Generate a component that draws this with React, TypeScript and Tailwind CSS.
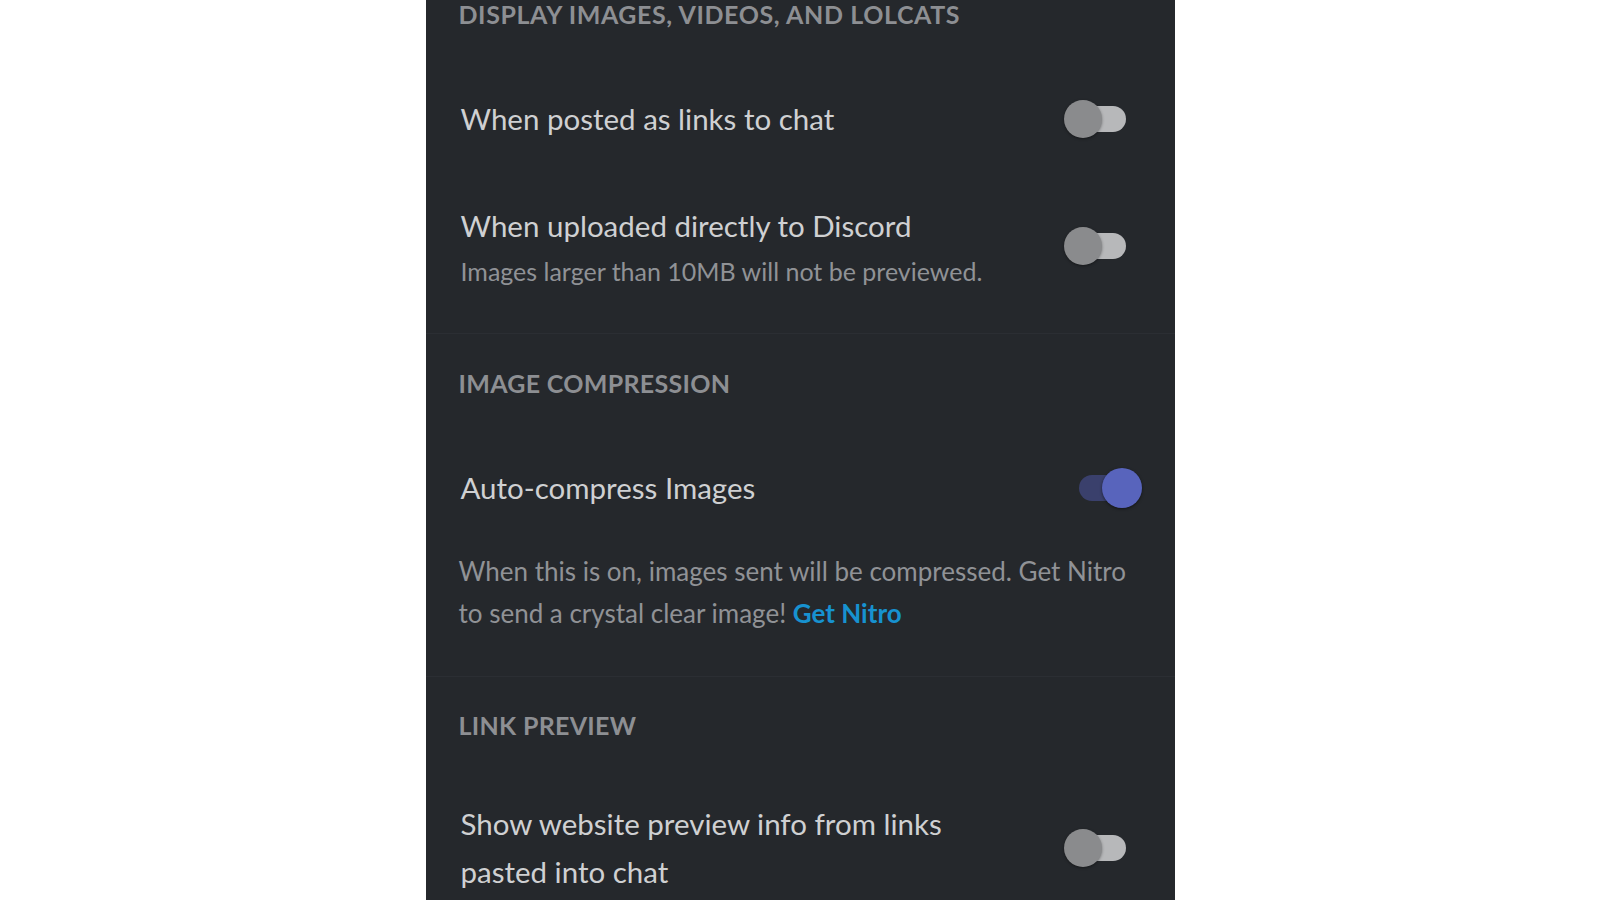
import React from "react";

function Toggle({ on }: { on?: boolean }) {
  if (on) {
    return (
      <div className="relative w-[63px] h-[40px] shrink-0">
        <div className="absolute left-0 top-[7px] w-[44px] h-[26px] rounded-full bg-[#3a406c]" />
        <div className="absolute right-0 top-0 w-[40px] h-[40px] rounded-full bg-[#5864bc] shadow-[0_1px_3px_rgba(0,0,0,0.5)]" />
      </div>
    );
  }
  return (
    <div className="relative w-[62px] h-[38px] shrink-0 mr-[16px]">
      <div className="absolute right-0 top-[6px] w-[50px] h-[26px] rounded-full bg-[#b7b8ba]" />
      <div className="absolute left-0 top-0 w-[38px] h-[38px] rounded-full bg-[#8a8b8d] shadow-[0_1px_3px_rgba(0,0,0,0.4)]" />
    </div>
  );
}

export default function App() {
  const font = { fontFamily: "Lato, 'Open Sans', sans-serif" } as React.CSSProperties;
  return (
    <div className="w-[1600px] h-[900px] bg-white flex justify-center overflow-hidden" style={font}>
      <div className="w-[749px] h-[900px] bg-[#25282c] flex flex-col">
        {/* Section 1 */}
        <div className="h-[334px] shrink-0 border-b border-[#2b2e33] flex flex-col">
          <div className="h-[30px] -mt-[1px] flex items-center pl-[33px] text-[25px] leading-[30px] font-bold text-[#8d8f93] tracking-[0.6px]">
            DISPLAY IMAGES, VIDEOS, AND LOLCATS
          </div>
          <div className="mt-[60px] h-[60px] flex items-center justify-between pl-[35px] pr-[33px]">
            <span className="text-[29.5px] leading-[40px] text-[#cfd0d2]">When posted as links to chat</span>
            <Toggle />
          </div>
          <div className="mt-[57px] flex items-start justify-between pl-[35px] pr-[33px]">
            <div className="flex flex-col">
              <span className="text-[29.5px] leading-[40px] text-[#cfd0d2]">When uploaded directly to Discord</span>
              <span className="mt-[5px] text-[25px] leading-[40px] text-[#909296]">Images larger than 10MB will not be previewed.</span>
            </div>
            <div className="mt-[21px]">
              <Toggle />
            </div>
          </div>
        </div>
        {/* Section 2 */}
        <div className="h-[343px] shrink-0 border-b border-[#2b2e33] flex flex-col">
          <div className="mt-[34px] h-[30px] flex items-center pl-[33px] text-[25px] leading-[30px] font-bold text-[#8d8f93] tracking-[0.3px]">
            IMAGE COMPRESSION
          </div>
          <div className="mt-[60px] h-[60px] flex items-center justify-between pl-[35px] pr-[33px]">
            <span className="text-[29.5px] leading-[40px] text-[#cfd0d2]">Auto-compress Images</span>
            <Toggle on />
          </div>
          <p className="mt-[32px] pl-[33px] text-[26px] leading-[42px] text-[#909296]">
            When this is on, images sent will be compressed. Get Nitro
            <br />
            to send a crystal clear image!{" "}
            <span className="font-bold text-[#1792d0]">Get Nitro</span>
          </p>
        </div>
        {/* Section 3 */}
        <div className="flex flex-col">
          <div className="mt-[33px] h-[30px] flex items-center pl-[33px] text-[25px] leading-[30px] font-bold text-[#8d8f93] tracking-[0.3px]">
            LINK PREVIEW
          </div>
          <div className="mt-[60px] flex items-center justify-between pl-[35px] pr-[33px]">
            <span className="text-[29.5px] leading-[48px] text-[#cfd0d2]">
              Show website preview info from links
              <br />
              pasted into chat
            </span>
            <Toggle />
          </div>
        </div>
      </div>
    </div>
  );
}
